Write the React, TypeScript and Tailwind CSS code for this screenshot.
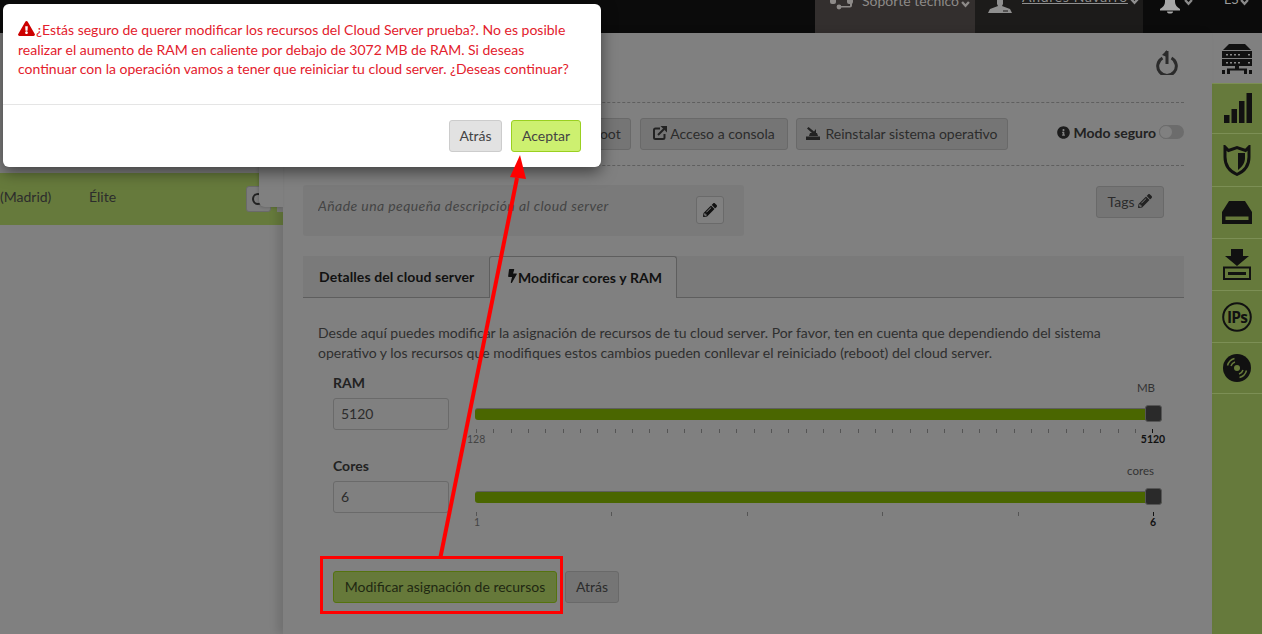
import React from "react";
import { FaBolt, FaExclamationTriangle, FaInfoCircle, FaPencilAlt } from "react-icons/fa";

const FONT = "font-['Lato','Liberation_Sans',sans-serif]";

function Chev({ className }: { className: string }) {
  return (
    <svg viewBox="0 0 10 8" className={"w-[9px] h-[8px] shrink-0 " + className} fill="none">
      <path d="M1.200 1.800L5 6l3.800-4.200" stroke="currentColor" strokeWidth="2.600" />
    </svg>
  );
}
function ServerIcon() {
  return (
    <svg viewBox="0 0 30 30" className="w-[30px] h-[30px]" fill="#111">
      <path d="M7 0h16l6 6H1z" />
      <rect x="0" y="7" width="30" height="7" />
      <rect x="0" y="15" width="30" height="7" />
      <rect x="13" y="22" width="4" height="3" />
      <rect x="5" y="24.5" width="20" height="2" />
      <rect x="0" y="26" width="3" height="4" />
      <rect x="5" y="26" width="3" height="4" />
      <rect x="22" y="26" width="3" height="4" />
      <rect x="27" y="26" width="3" height="4" />
      <g fill="#8a8a8a">
        <rect x="4" y="10" width="2" height="1.5" /><rect x="8" y="10" width="2" height="1.5" /><rect x="12" y="10" width="2" height="1.5" /><rect x="16" y="10" width="2" height="1.5" /><rect x="26" y="10" width="2" height="1.5" />
        <rect x="4" y="18" width="2" height="1.5" /><rect x="8" y="18" width="2" height="1.5" /><rect x="12" y="18" width="2" height="1.5" /><rect x="16" y="18" width="2" height="1.5" /><rect x="26" y="18" width="2" height="1.5" />
      </g>
    </svg>
  );
}
function BarsIcon() {
  return (
    <svg viewBox="0 0 28 30" className="w-[28px] h-[30px] mb-[2px] ml-[2px]" fill="#111">
      <rect x="0" y="22" width="5.5" height="8" /><rect x="7.5" y="16" width="5.5" height="14" /><rect x="15" y="8" width="5.5" height="22" /><rect x="22.5" y="0" width="5.5" height="30" />
    </svg>
  );
}
function ShieldIcon() {
  return (
    <svg viewBox="0 0 28 31" className="w-[28px] h-[31px]">
      <path d="M14 29.500C6 26 2 20 2 12V2l3.500 3.500L14 2.500l8.500 3L26 2v10c0 8-4 14-12 17.500z" fill="none" stroke="#111" strokeWidth="3" />
      <path d="M15 8h7v5c0 5-3 9-7 12z" fill="#111" />
    </svg>
  );
}
function DriveIcon() {
  return (
    <svg viewBox="0 0 30 23" className="w-[30px] h-[23px]">
      <path d="M7 0h16l7 11v12H0V11z" fill="#111" />
      <rect x="3.500" y="15.500" width="23" height="3.500" fill="#66793a" />
    </svg>
  );
}
function DownloadIcon() {
  return (
    <svg viewBox="0 0 28 31" className="w-[28px] h-[31px]">
      <path d="M8 0h12v7h6L14 17 2 7h6z" fill="#111" />
      <rect x="1" y="18.500" width="26" height="11.500" fill="none" stroke="#111" strokeWidth="2" />
      <rect x="5" y="23" width="18" height="3" fill="#111" />
    </svg>
  );
}
function IpsIcon() {
  return (
    <svg viewBox="0 0 30 30" className="w-[30px] h-[30px]">
      <circle cx="15" cy="15" r="13.800" fill="none" stroke="#111" strokeWidth="2" />
      <text x="15" y="20.500" textAnchor="middle" fontSize="15.500" fontWeight="700" fill="#111" fontFamily="'Open Sans',sans-serif" letterSpacing="-0.8">IPs</text>
    </svg>
  );
}
function DiscIcon() {
  return (
    <svg viewBox="0 0 28 28" className="w-[28px] h-[28px]">
      <circle cx="14" cy="14" r="14" fill="#111" />
      <circle cx="14" cy="14" r="3" fill="#66793a" />
      <path d="M4.500 11.500a10 10 0 0 1 7-7M8 12a6 6 0 0 1 4-4M23.500 16.500a10 10 0 0 1-7 7M20 16a6 6 0 0 1-4 4" stroke="#66793a" strokeWidth="1.500" fill="none" />
    </svg>
  );
}
function PowerIcon() {
  return (
    <svg viewBox="0 0 22 25" className="w-[22px] h-[25px]" fill="none">
      <path d="M6.500 8a9.300 9.300 0 1 0 9 0" stroke="#2b2b2b" strokeWidth="3" />
      <path d="M11 1v13" stroke="#2b2b2b" strokeWidth="3" />
      <path d="M6 5l5-5v7z" fill="#2b2b2b" />
    </svg>
  );
}
function ConsoleIcon() {
  return (
    <svg viewBox="0 0 14 14" className="w-[14px] h-[14px]" fill="none">
      <path d="M7 2.500H2.500a1.500 1.500 0 0 0-1.500 1.500v7.500A1.500 1.500 0 0 0 2.500 13h7.500a1.500 1.500 0 0 0 1.500-1.500V8" stroke="#222" strokeWidth="2" />
      <path d="M5 9l6-6" stroke="#222" strokeWidth="2" />
      <path d="M7.500 0H14v6.500z" fill="#222" />
    </svg>
  );
}
function ReinstallIcon() {
  return (
    <svg viewBox="0 0 14 14" className="w-[14px] h-[14px]" fill="#222">
      <rect x="0" y="10.500" width="14" height="3.500" />
      <path d="M3 10l1-3h7l1 3z" />
      <path d="M2.500 1L8 5.500 10 3v6H4l2-2L1 2.500z" />
    </svg>
  );
}
function HeadsetIcon() {
  return (
    <svg viewBox="0 0 24 14" className="w-[24px] h-[14px]" fill="#8d8a88">
      <rect x="0" y="0" width="6" height="7" rx="2" />
      <rect x="17" y="0" width="6" height="7" rx="2" />
      <path d="M22 5v3.500a2 2 0 0 1-2 2H10v-1.500h10V5z" />
      <circle cx="9" cy="10" r="2.400" />
    </svg>
  );
}
function UserIcon() {
  return (
    <svg viewBox="0 0 24 13" className="w-[24px] h-[13px]" fill="#8f8f8f">
      <path d="M9 0h6v4l-1 2 8 3 2 4H0l2-4 8-3-1-2z" />
      <rect x="15" y="10.500" width="5" height="1" fill="#1c1b1a" />
    </svg>
  );
}
function BellIcon() {
  return (
    <svg viewBox="0 0 22 14" className="w-[22px] h-[14px]" fill="#a8a8a8">
      <path d="M6 -4h10v6c0 3 2 5 5 7v1.500H1V9c3-2 5-4 5-7z" />
      <path d="M8 11.500h6a3 2 0 0 1-6 0z" />
    </svg>
  );
}

function GrayButton({ children, className }: { children: React.ReactNode; className: string }) {
  return (
    <div className={"h-[32px] rounded-[3px] border border-[#696969] bg-[#757575] pb-[2px] text-[#2c2c2c] text-[14px] flex items-center justify-center " + className}>
      {children}
    </div>
  );
}

function Ticks({ count, major }: { count: number; major: number[] }) {
  return (
    <div className="flex justify-between w-[678px] ml-px">
      {Array.from({ length: count }, (_, i) => (
        <span key={i} className={"w-px h-[4px] " + (major.includes(i) ? "bg-[#111]" : "bg-[#555]")} />
      ))}
    </div>
  );
}

function Slider(props: { label: string; value: string; unit: string; unitClass: string; min: string; max: string; count: number; minClass: string }) {
  return (
    <div className="ml-[30px] flex">
      <div className="w-[116px] shrink-0">
        <div className="h-[24px] text-[14px] font-bold leading-[18px] text-[#222]">{props.label}</div>
        <div className="h-[32px] rounded-[3px] border border-[#6a6a6a] px-[7px] pb-[2px] flex items-center text-[14px] text-[#2c2c2c]">{props.value}</div>
      </div>
      <div className="ml-[26px] w-[687px] shrink-0">
        <div className={"h-[24px] pt-[7px] text-[11.500px] leading-[14px] text-[#333] text-right " + props.unitClass}>{props.unit}</div>
        <div className="relative mt-[10px] h-[12px] rounded-l-[3px] border-t border-[#5e5e5e] bg-[#4a6600]">
          <div className="absolute right-0 top-[-4px] w-[17px] h-[17px] rounded-[3px] border border-[#555] bg-[#2a2a2a]" />
        </div>
        <div className="mt-[9px]">
          <Ticks count={props.count} major={[props.count - 1]} />
        </div>
        <div className="relative w-[687px] h-[14px] -mt-[1px] text-[10.500px] leading-[14px]">
          <span className={"absolute text-[#444] " + props.minClass}>{props.min}</span>
          <span className="absolute right-[-6px] w-[30px] text-center font-bold text-[#111]">{props.max}</span>
        </div>
      </div>
    </div>
  );
}

function SideItem({ children, h }: { children: React.ReactNode; h: string }) {
  return <div className={"border-t border-[#7c8f55] flex items-center justify-center " + h}>{children}</div>;
}

export default function App() {
  return (
    <div className={"relative w-[1262px] h-[634px] overflow-hidden bg-[#808080] " + FONT}>
      <header className="h-[33px] bg-[#0b0b0b] flex justify-end overflow-hidden">
        <div className="w-[160px] bg-[#332f2e] flex items-start pl-[15px] -mt-[3px] h-[36px] text-[#8d8a88] text-[14px]">
          <HeadsetIcon />
          <span className="ml-[8px] leading-[14px] -mt-[3px]">Soporte técnico</span>
          <Chev className="mt-[3px] ml-[2px]" />
        </div>
        <div className="w-[168px] bg-[#1c1b1a] flex items-start pl-[13px] text-[#8f8f8f] text-[14px]">
          <UserIcon />
          <span className="ml-[10px] -mt-[10px] leading-[14px] underline whitespace-nowrap tracking-[0.7px]">Andrés Navarro</span>
          <Chev className="ml-[2px] -mt-[3px]" />
        </div>
        <div className="w-[119px] flex items-start text-[#9a9a9a] text-[13px]">
          <div className="ml-[16px] w-[22px] h-[14px] shrink-0"><BellIcon /></div>
          <Chev className="ml-[3px] -mt-[2px] text-[#8a8a8a]" />
          <span className="ml-[31px] -mt-[8px] leading-[14px]">ES</span>
          <Chev className="-mt-[2px] ml-px text-[#8a8a8a]" />
        </div>
      </header>

      <div className="flex h-[601px]">
        <aside className="w-[283px] shrink-0 pt-[140px]">
          <div className="h-[52px] bg-[#667a3c] flex items-center text-[14px] text-[#2c2c2c] relative">
            <span className="w-[89px] shrink-0 mb-[6px]">(Madrid)</span>
            <span className="w-[157px] shrink-0 mb-[6px]">Élite</span>
            <div className="w-[25px] h-[26px] rounded-[3px] border border-[#6a6a6a] bg-[#7c7c7c] shrink-0 flex items-center pl-[5px]">
              <span className="w-[12px] h-[12px] rounded-full border-2 border-[#222]" />
            </div>
            <div className="ml-[6px] w-[6px] h-[26px] bg-[#7c7c7c] shrink-0" />
          </div>
        </aside>

        <main className="relative w-[929px] shrink-0 bg-[#808080] pl-[20px] pr-[28px] shadow-[-6px_0_8px_rgba(0,0,0,0.12)]">
          <div className="absolute left-[-24px] top-[120px] w-[24px] h-[54px] rounded-bl-[6px] bg-[#808080] shadow-[-1px_1px_3px_rgba(0,0,0,0.15)]" />
          <div className="h-[70px] border-b border-dashed border-[#5f5f5f] flex justify-end items-start pt-[17px] pr-[6px]">
            <PowerIcon />
          </div>
          <div className="h-[63px] border-b border-dashed border-[#5f5f5f] flex items-start pt-[15px]">
            <GrayButton className="w-[255px]">Apagar</GrayButton>
            <GrayButton className="w-[65px] ml-[8px]">Reboot</GrayButton>
            <GrayButton className="w-[148px] ml-[9px] gap-[3px]"><ConsoleIcon /><span>Acceso a consola</span></GrayButton>
            <GrayButton className="w-[212px] ml-[8px] gap-[5px]"><ReinstallIcon /><span>Reinstalar sistema operativo</span></GrayButton>
            <div className="ml-auto h-[28px] flex items-center text-[14px] font-bold text-[#222]">
              <FaInfoCircle className="w-[13px] h-[13px] mr-[4px] text-[#1c1c1c]" />
              Modo seguro
              <span className="relative ml-[3px] w-[25px] h-[14px] rounded-full bg-[#6c6c6c]">
                <span className="absolute left-0 top-0 w-[14px] h-[14px] rounded-full bg-[#808080] border border-[#6c6c6c]" />
              </span>
            </div>
          </div>
          <div className="flex items-start pt-[19px] h-[90px]">
            <div className="w-[441px] h-[51px] rounded-[3px] bg-[#7a7a7a] flex items-start pl-[15px] pt-[11px] relative">
              <span className="italic text-[14px] tracking-[0.42px] leading-[20px] text-[#444] w-[293px] overflow-hidden whitespace-nowrap">Añade una pequeña descripción al cloud server</span>
              <div className="absolute left-[393px] top-[11px] w-[28px] h-[28px] rounded-[3px] border border-[#6a6a6a] bg-[#808080] flex items-center justify-center">
                <FaPencilAlt className="w-[14px] h-[14px] text-[#111]" />
              </div>
            </div>
            <GrayButton className="w-[68px] ml-auto mr-[20px] mt-px gap-[4px]">Tags<FaPencilAlt className="w-[14px] h-[14px] text-[#222]" /></GrayButton>
          </div>
          <div className="h-[42px] bg-[#7a7a7a] border-b border-[#5e5e5e] flex text-[14px] font-bold text-[#111] tracking-[0.1px]">
            <div className="w-[186px] h-[41px] flex items-center pl-[16px]">Detalles del cloud server</div>
            <div className="w-[188px] h-[42px] bg-[#808080] border border-b-0 border-[#5e5e5e] rounded-t-[3px] flex items-center pl-[17px]">
              <FaBolt className="w-[11px] h-[14px] -mt-[3px]" />Modificar cores y RAM
            </div>
          </div>
          <p className="mt-[25px] ml-[15px] w-[800px] text-[14px] leading-[20px] text-[#2f2f2f]">
            Desde aquí puedes modificar la asignación de recursos de tu cloud server. Por favor, ten en cuenta que dependiendo del sistema operativo y los recursos que modifiques estos cambios pueden conllevar el reiniciado (reboot) del cloud server.
          </p>
          <div className="mt-[11px]">
            <Slider label="RAM" value="5120" unit="MB" unitClass="pr-[7px]" min="128" max="5120" count={40} minClass="left-[-8px]" />
          </div>
          <div className="mt-[11px]">
            <Slider label="Cores" value="6" unit="cores" unitClass="pr-[8px]" min="1" max="6" count={6} minClass="left-[-1px]" />
          </div>
          <div className="mt-[42px] ml-[30px] flex gap-[8px]">
            <div className="w-[224px] h-[32px] rounded-[3px] border border-[#55730f] bg-[#66793a] pb-[2px] text-[14px] text-[#1f2812] flex items-center justify-center">Modificar asignación de recursos</div>
            <GrayButton className="w-[54px]">Atrás</GrayButton>
          </div>
        </main>

        <nav className="w-[50px] shrink-0 flex flex-col">
          <div className="h-[50px] flex items-center justify-center pt-[1px]"><ServerIcon /></div>
          <div className="bg-[#667a3c] flex-1 flex flex-col">
            <SideItem h="h-[50px]"><BarsIcon /></SideItem>
            <SideItem h="h-[53px]"><ShieldIcon /></SideItem>
            <SideItem h="h-[52px]"><DriveIcon /></SideItem>
            <SideItem h="h-[52px]"><DownloadIcon /></SideItem>
            <SideItem h="h-[52px]"><IpsIcon /></SideItem>
            <SideItem h="h-[51px]"><DiscIcon /></SideItem>
            <div className="border-t border-[#7c8f55]" />
          </div>
        </nav>
      </div>

      <div className="absolute left-[3px] top-[4px] w-[598px] h-[163px] rounded-[6px] bg-white shadow-[0_5px_15px_rgba(0,0,0,0.5)]">
        <div className="h-[101px] border-b border-[#e5e5e5] pl-[15px] pr-[21px] pt-[16px] text-[14px] leading-[19.600px] text-[#e3202c]">
          <FaExclamationTriangle className="inline w-[17px] h-[15px] mr-px align-[-1px] text-[#cc0000]" />¿Estás seguro de querer modificar los recursos del Cloud Server prueba?. No es posible realizar el aumento de RAM en caliente por debajo de 3072 MB de RAM. Si deseas continuar con la operación vamos a tener que reiniciar tu cloud server. ¿Deseas continuar?
        </div>
        <div className="flex justify-end gap-[9px] pt-[15px] pr-[20px]">
          <div className="w-[53px] h-[32px] rounded-[3px] border border-[#cccccc] bg-[#e2e2e2] pb-[2px] text-[14px] text-[#444] flex items-center justify-center">Atrás</div>
          <div className="w-[70px] h-[32px] rounded-[3px] border border-[#9ad020] bg-[#cdf070] pb-[2px] text-[14px] text-[#444] flex items-center justify-center">Aceptar</div>
        </div>
      </div>

      <div className="absolute left-[320px] top-[556px] w-[243px] h-[58px] border-[3px] border-[#ff0000]" />
      <svg className="absolute left-0 top-0 w-[1262px] h-[634px] pointer-events-none" viewBox="0 0 1262 634">
        <path d="M440.500 557L517 178" stroke="#ff0000" strokeWidth="4" fill="none" />
        <path d="M520 155L526 179 510 177z" fill="#ff0000" />
      </svg>
    </div>
  );
}
